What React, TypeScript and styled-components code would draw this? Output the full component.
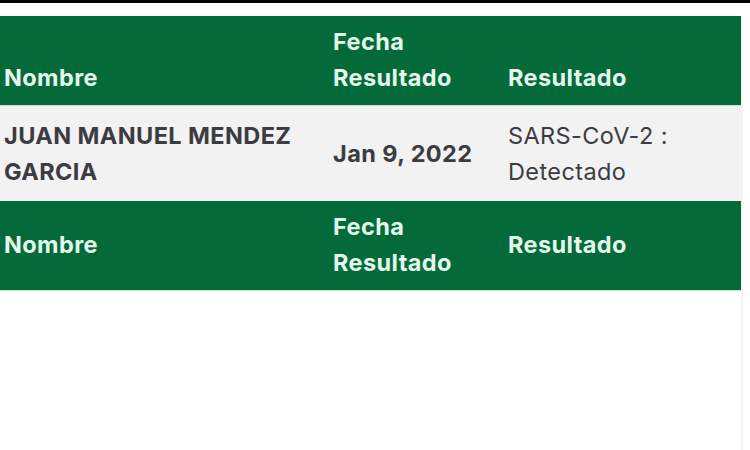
import styled, { createGlobalStyle } from 'styled-components'

const GlobalStyle = createGlobalStyle`
  html, body {
    margin: 0;
    padding: 0;
    background: #ffffff;
  }
  body {
    font-family: Inter, "Liberation Sans", sans-serif;
  }
`

const Page = styled.div`
  width: 750px;
  height: 450px;
  box-sizing: border-box;
  border-top: 3px solid #050505;
  padding-top: 13px;
  overflow: hidden;
`

const Table = styled.div`
  width: 741px;
  border-right: 2px solid #f4f4f4;
  box-sizing: content-box;
  height: 100%;
`

const Row = styled.div<{ $head?: boolean; $align: 'end' | 'center' }>`
  display: grid;
  grid-template-columns: 329px 175px 1fr;
  align-items: ${(p) => p.$align};
  background: ${(p) => (p.$head ? '#056a39' : '#f2f2f3')};
  color: ${(p) => (p.$head ? '#e4f7ec' : '#3c3c40')};
  padding: ${(p) => (p.$head ? '8px 0 9px' : '12px 0 11px')};
  border-bottom: ${(p) => (p.$head ? '1px solid #bfe3cc' : 'none')};
`

const Cell = styled.div<{ $weight?: number }>`
  padding-left: 4px;
  font-size: 23.5px;
  line-height: 36px;
  font-weight: ${(p) => p.$weight ?? 700};
  letter-spacing: 0.4px;
  white-space: nowrap;
`

const Header = ({ align }: { align: 'end' | 'center' }) => (
  <Row $head $align={align}>
    <Cell>Nombre</Cell>
    <Cell>
      Fecha
      <br />
      Resultado
    </Cell>
    <Cell>Resultado</Cell>
  </Row>
)

export default function App() {
  return (
    <>
      <GlobalStyle />
      <Page>
        <Table>
          <Header align="end" />
          <Row $align="center">
            <Cell>
              JUAN MANUEL MENDEZ
              <br />
              GARCIA
            </Cell>
            <Cell>Jan 9, 2022</Cell>
            <Cell $weight={400}>
              SARS-CoV-2 :
              <br />
              Detectado
            </Cell>
          </Row>
          <Header align="center" />
        </Table>
      </Page>
    </>
  )
}
